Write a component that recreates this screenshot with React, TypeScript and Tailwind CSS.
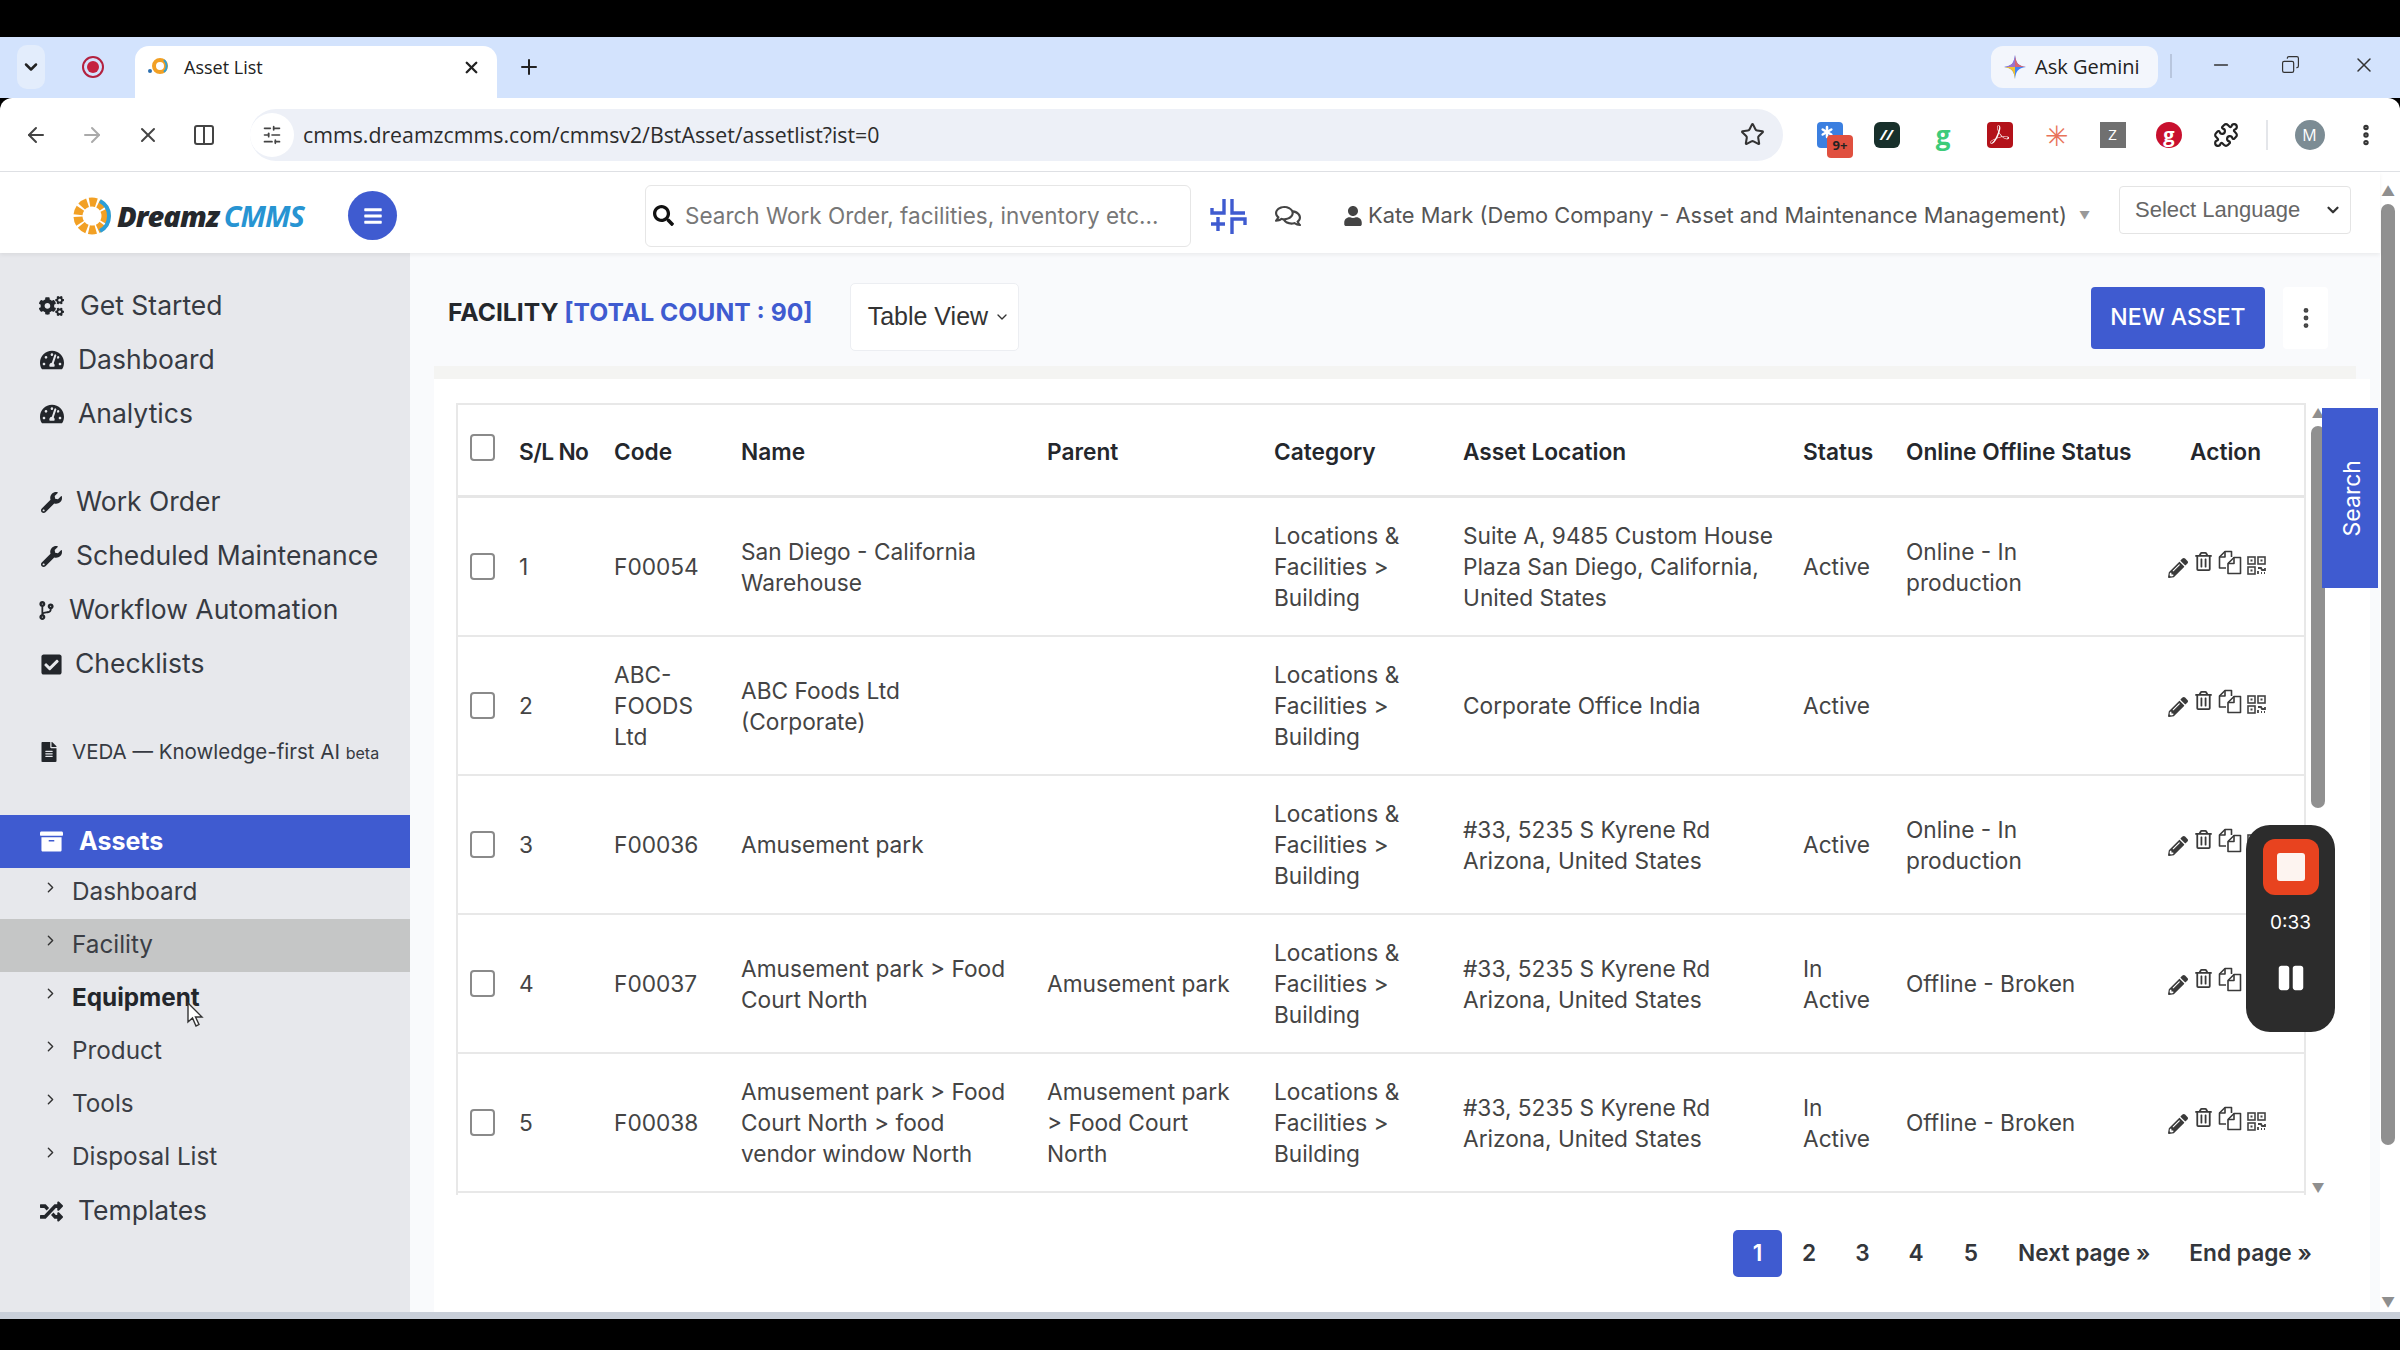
import React from "react";
import { FaCogs, FaTachometerAlt, FaWrench, FaCodeBranch, FaCheckSquare, FaFileAlt, FaArchive, FaRandom, FaPencilAlt, FaRegTrashAlt, FaSearch, FaUser, FaRegComments, FaBars, FaPause } from "react-icons/fa";
import { SiAdobeacrobatreader } from "react-icons/si";
import { LuArrowLeft, LuArrowRight, LuX, LuColumns2, LuSlidersHorizontal, LuStar, LuPuzzle, LuChevronDown, LuChevronRight, LuPlus, LuMinus, LuCopy, LuEllipsisVertical, LuAsterisk } from "react-icons/lu";

const font = "font-['Inter','Open_Sans',sans-serif]";

type Row = { n: number; code: string[]; name: string[]; parent: string[]; cat: string[]; loc: string[]; status: string[]; online: string[] };
const cat = ["Locations &", "Facilities >", "Building"];
const az = ["#33, 5235 S Kyrene Rd", "Arizona, United States"];
const rows: Row[] = [
  { n: 1, code: ["F00054"], name: ["San Diego - California", "Warehouse"], parent: [], cat, loc: ["Suite A, 9485 Custom House", "Plaza San Diego, California,", "United States"], status: ["Active"], online: ["Online - In", "production"] },
  { n: 2, code: ["ABC-", "FOODS", "Ltd"], name: ["ABC Foods Ltd", "(Corporate)"], parent: [], cat, loc: ["Corporate Office India"], status: ["Active"], online: [] },
  { n: 3, code: ["F00036"], name: ["Amusement park"], parent: [], cat, loc: az, status: ["Active"], online: ["Online - In", "production"] },
  { n: 4, code: ["F00037"], name: ["Amusement park > Food", "Court North"], parent: ["Amusement park"], cat, loc: az, status: ["In", "Active"], online: ["Offline - Broken"] },
  { n: 5, code: ["F00038"], name: ["Amusement park > Food", "Court North > food", "vendor window North"], parent: ["Amusement park", "> Food Court", "North"], cat, loc: az, status: ["In", "Active"], online: ["Offline - Broken"] },
];

const Lines = ({ l }: { l: string[] }) => (
  <div className="flex flex-col justify-center">
    {l.map((t, i) => <div key={i} className="whitespace-nowrap">{t}</div>)}
  </div>
);
const Box = () => <div className="w-[25px] h-[27px] rounded-[4px] border-2 border-[#8a8a8a] bg-white" />;
const cols = "grid grid-cols-[61px_95px_127px_306px_227px_189px_340px_103px_262px_138px]";

const SideItem = ({ icon, label, gap }: { icon: React.ReactNode; label: string; gap: string }) => (
  <div className="h-[54px] flex items-center pl-[39px] text-[26.5px] text-[#363a42]">
    <span className="w-[25px] flex justify-center text-[#23262b]">{icon}</span>
    <span className={gap + " whitespace-nowrap"}>{label}</span>
  </div>
);
const SubItem = ({ label, cls }: { label: string; cls?: string }) => (
  <div className={"h-[53px] flex items-center pl-[42px] text-[24.3px] text-[#3b3e45] " + (cls || "")}>
    <LuChevronRight size={17} className="text-[#333] -mt-[10px]" />
    <span className="ml-[13px] -mt-[2px]">{label}</span>
  </div>
);

function Logo() {
  return (
    <div className="flex items-center w-[278px]">
      <svg width="46" height="46" viewBox="0 0 46 46">
        <circle cx="22" cy="23" r="14" fill="none" stroke="#f2a024" strokeWidth="9" strokeDasharray="7 2" />
        <path d="M30 8 A17 17 0 0 1 30 38" fill="none" stroke="#2c9fd8" strokeWidth="4" />
        <circle cx="22" cy="23" r="6" fill="#fff" />
      </svg>
      <span className="ml-[1px] italic font-extrabold text-[29px] tracking-[-1px] text-[#25282c] font-['Open_Sans',sans-serif]">Dreamz</span>
      <span className="ml-[5px] italic font-bold text-[29px] tracking-[-1px] text-[#2794d2] font-['Open_Sans',sans-serif]">CMMS</span>
    </div>
  );
}

function Ext({ children, cls }: { children?: React.ReactNode; cls: string }) {
  return <div className={"w-[26px] h-[26px] rounded-[4px] flex items-center justify-center text-white text-[15px] font-bold relative " + cls}>{children}</div>;
}

const CopyIcon = () => (
  <svg width="24" height="25" viewBox="0 0 24 25" fill="none" stroke="#3a3a3a" strokeWidth="1.6" strokeLinejoin="round" className="ml-[5px]">
    <path d="M8 18H1.5V7L7 1.5H13.5V7" />
    <path d="M7 1.5V7H1.5" />
    <path d="M16 7.5H22.5V23.5H10V13.5L16 7.5Z" fill="#fff" />
    <path d="M16 7.5V13.5H10" />
  </svg>
);
const QrIcon = () => (
  <svg width="19" height="19" viewBox="0 0 19 19" fill="none" stroke="#444" strokeWidth="1.6" className="ml-[5px] mt-[6px]">
    <rect x="1" y="1" width="7" height="7" />
    <rect x="11" y="1" width="7" height="7" />
    <rect x="1" y="11" width="7" height="7" />
    <rect x="3.5" y="3.5" width="2" height="2" fill="#444" stroke="none" />
    <rect x="13.5" y="3.5" width="2" height="2" fill="#444" stroke="none" />
    <rect x="3.5" y="13.5" width="2" height="2" fill="#444" stroke="none" />
    <path d="M11 12H14L15 14H18V12M11 15V18M14 17H15M17 17H18" strokeWidth="1.8" />
  </svg>
);
function Actions() {
  return (
    <div className="flex items-start text-[#3a3a3a] -mt-[6px]">
      <FaPencilAlt size={20} className="mt-[8px]" />
      <FaRegTrashAlt size={19} className="ml-[6px] mt-[2px]" />
      <CopyIcon />
      <QrIcon />
    </div>
  );
}

export default function App() {
  return (
    <div className={"relative w-[2400px] h-[1350px] overflow-hidden bg-black flex flex-col " + font}>
      <div className="h-[37px] shrink-0 bg-black" />
      {/* Tab strip */}
      <div className="h-[61px] shrink-0 bg-[#d3e3fd] flex items-end pl-[17px] font-['Open_Sans',sans-serif] text-[#222]">
        <div className="self-center w-[28px] h-[44px] rounded-[10px] bg-[#e3edfc] flex items-center justify-center -mt-[2px]">
          <LuChevronDown size={20} strokeWidth={3} />
        </div>
        <div className="self-center ml-[37px] -mt-[2px] w-[22px] h-[22px] rounded-full border-2 border-[#b3213f] flex items-center justify-center">
          <div className="w-[12px] h-[12px] rounded-full bg-[#c5223f]" />
        </div>
        <div className="ml-[31px] w-[362px] h-[52px] bg-white rounded-t-[14px] flex items-center pl-[12px] pr-[16px] pb-[10px]">
          <svg width="22" height="22" viewBox="0 0 22 22"><circle cx="13" cy="10" r="6" fill="none" stroke="#f2a024" strokeWidth="4" /><path d="M17 4a8 8 0 0 1 0 12" fill="none" stroke="#2c9fd8" strokeWidth="2" /><circle cx="3" cy="15" r="2" fill="#2c6fb0" /></svg>
          <span className="ml-[15px] text-[18px]">Asset List</span>
          <LuX size={19} strokeWidth={3} className="ml-auto" />
        </div>
        <LuPlus size={24} strokeWidth={2} className="self-center ml-[20px] -mt-[2px]" />
        <div className="self-center ml-auto -mt-[2px] mr-[12px] h-[42px] w-[167px] bg-[#f3f6fc] rounded-[12px] flex items-center pl-[13px]">
          <svg width="22" height="24" viewBox="0 0 22 24"><path d="M11 0C12 8 14 11 22 12C14 13 12 16 11 24C10 16 8 13 0 12C8 11 10 8 11 0Z" fill="#4285f4" /><path d="M11 0C12 8 14 11 22 12L11 12Z" fill="#d96570" /><path d="M0 12C8 11 10 8 11 0L11 12Z" fill="#9b72cb" /><path d="M0 12C8 13 10 16 11 24L11 12Z" fill="#f2c230" /></svg>
          <span className="ml-[9px] text-[20px] font-medium whitespace-nowrap">Ask Gemini</span>
        </div>
        <div className="self-center -mt-[4px] w-[2px] h-[24px] bg-[#b8c6de]" />
        <div className="self-center -mt-[6px] flex items-center text-[#333]">
          <LuMinus size={22} strokeWidth={1.5} className="ml-[38px]" />
          <LuCopy size={19} strokeWidth={1.5} className="ml-[49px] -scale-x-100" />
          <LuX size={24} strokeWidth={1.5} className="ml-[52px] mr-[24px]" />
        </div>
      </div>
      {/* Toolbar */}
      <div className="h-[74px] shrink-0 bg-white rounded-tl-[12px] rounded-tr-[12px] border-b border-[#dfe1e5] flex items-center font-['Open_Sans',sans-serif] text-[#444]">
        <LuArrowLeft size={24} className="ml-[24px]" />
        <LuArrowRight size={24} className="ml-[32px] text-[#aaa]" />
        <LuX size={24} className="ml-[32px]" />
        <LuColumns2 size={24} className="ml-[32px]" />
        <div className="ml-[34px] w-[1533px] h-[52px] rounded-[26px] bg-[#edf0f7] flex items-center pr-[18px]">
          <div className="w-[44px] h-[44px] rounded-full bg-white flex items-center justify-center"><LuSlidersHorizontal size={20} /></div>
          <span className="ml-[9px] text-[21.3px] text-[#2c2c2c]">cmms.dreamzcmms.com/cmmsv2/BstAsset/assetlist?ist=0</span>
          <LuStar size={25} className="ml-auto text-[#333]" />
        </div>
        <div className="flex items-center ml-[34px]">
          <Ext cls="bg-[#3b7fe0]">
            <LuAsterisk size={20} strokeWidth={3} className="-mt-[6px] -ml-[6px]" />
            <span className="absolute left-[10px] top-[13px] w-[26px] h-[23px] rounded-[4px] bg-[#e0503f] text-[13px] text-[#222] flex items-center justify-center">9+</span>
          </Ext>
          <Ext cls="ml-[30.5px] bg-[#18302b] text-[#4fd18a] italic rounded-[6px]">//</Ext>
          <div className="ml-[30.5px] w-[26px] flex justify-center text-[#3dcb7a] text-[26px] font-bold leading-none">g</div>
          <Ext cls="ml-[30.5px] bg-[#b3121a]"><SiAdobeacrobatreader size={19} /></Ext>
          <div className="ml-[30.5px] w-[26px] flex justify-center text-[#e8735a] text-[28px] leading-none">✳</div>
          <Ext cls="ml-[30.5px] bg-[#707070] rounded-none font-normal">Z</Ext>
          <div className="ml-[30.5px] w-[26px] h-[26px] rounded-full bg-[#c8102e] text-white text-[20px] font-bold flex items-center justify-center leading-none">g</div>
          <LuPuzzle size={26} className="ml-[30.5px] text-[#222]" />
          <div className="ml-[27px] w-[2px] h-[30px] bg-[#e4e6ea]" />
          <div className="ml-[27px] w-[30px] h-[30px] rounded-full bg-[#7c8c94] text-white text-[16px] flex items-center justify-center">M</div>
          <LuEllipsisVertical size={26} strokeWidth={3} className="ml-[28px] text-[#333]" />
        </div>
      </div>
      {/* App area */}
      <div className="h-[1147px] shrink-0 bg-white flex relative border-b-[7px] border-[#c9cfd9]">
        <div className="flex-1 flex flex-col min-w-0">
          <header className="h-[81px] shrink-0 flex items-center pl-[70px] pt-[6px] shadow-[0_2px_4px_rgba(0,0,0,0.06)] relative z-10 bg-white">
            <Logo />
            <div className="w-[49px] h-[49px] rounded-full bg-[#3f5bd0] text-white flex items-center justify-center"><FaBars size={20} /></div>
            <div className="ml-[248px] w-[546px] h-[62px] rounded-[6px] border border-[#e6e6e6] flex items-center pl-[7px] text-[#111]">
              <FaSearch size={21} />
              <span className="ml-[11px] text-[22.5px] text-[#777] whitespace-nowrap">Search Work Order, facilities, inventory etc...</span>
            </div>
            <svg width="38" height="38" viewBox="0 0 36 38" fill="none" stroke="#3f5bd0" strokeWidth="3.4" className="ml-[18px]">
              <path d="M14 2V16H2V11" />
              <path d="M22 2V16H35" />
              <path d="M1 27H15M8 20V34" />
              <path d="M22 37V22H35V28" />
            </svg>
            <FaRegComments size={26} className="ml-[28px] text-[#444]" />
            <FaUser size={20} className="ml-[42px] text-[#444]" />
            <span className="ml-[5px] text-[21.85px] text-[#555] whitespace-nowrap">Kate Mark (Demo Company - Asset and Maintenance Management)</span>
            <span className="ml-[12px] text-[#999] text-[11px]">▼</span>
            <div className="ml-[29px] w-[232px] h-[48px] -mt-[12px] rounded-[4px] border border-[#e4e4e4] flex items-center pl-[15px] pr-[8px] font-['Liberation_Sans',sans-serif] text-[22px] text-[#666]">
              Select Language
              <LuChevronDown size={18} strokeWidth={3} className="ml-auto text-[#333]" />
            </div>
          </header>
          <div className="flex-1 flex min-h-0">
            <aside className="w-[410px] shrink-0 bg-[#e7e8ec] pt-[26px] flex flex-col">
              <SideItem icon={<FaCogs size={26} />} label="Get Started" gap="ml-[16px]" />
              <SideItem icon={<FaTachometerAlt size={24} />} label="Dashboard" gap="ml-[14px]" />
              <SideItem icon={<FaTachometerAlt size={24} />} label="Analytics" gap="ml-[14px]" />
              <div className="h-[34px]" />
              <SideItem icon={<FaWrench size={21} />} label="Work Order" gap="ml-[12px]" />
              <SideItem icon={<FaWrench size={21} />} label="Scheduled Maintenance" gap="ml-[12px]" />
              <SideItem icon={<FaCodeBranch size={19} className="-ml-[10px]" />} label="Workflow Automation" gap="ml-[5px]" />
              <SideItem icon={<FaCheckSquare size={23} />} label="Checklists" gap="ml-[11px]" />
              <div className="h-[34px]" />
              <div className="h-[54px] flex items-center pl-[39px] text-[20.5px] text-[#363a42]">
                <FaFileAlt size={20} className="text-[#23262b]" />
                <span className="ml-[13px] whitespace-nowrap">VEDA — Knowledge-first AI <span className="text-[16px]">beta</span></span>
              </div>
              <div className="h-[36px]" />
              <div className="h-[53px] bg-[#3f5bd0] flex items-center pl-[40px] text-white text-[25px] font-bold">
                <FaArchive size={23} />
                <span className="ml-[16px]">Assets</span>
              </div>
              <SubItem label="Dashboard" cls="!h-[49px] mb-[2px]" />
              <SubItem label="Facility" cls="bg-[#c5c6c6]" />
              <SubItem label="Equipment" cls="font-bold text-[#23262b]" />
              <SubItem label="Product" />
              <SubItem label="Tools" />
              <SubItem label="Disposal List" />
              <SideItem icon={<FaRandom size={23} />} label="Templates" gap="ml-[14px]" />
            </aside>
            <main className="flex-1 min-w-0 bg-[#f9fafc] flex flex-col">
              <div className="h-[113px] shrink-0 flex items-center pl-[38px] pr-[52px]">
                <div className="text-[24.7px] font-bold text-[#24272c] whitespace-nowrap mt-[6px]">FACILITY <span className="text-[#3f5bd0]">[TOTAL COUNT : 90]</span></div>
                <div className="ml-[37px] mt-[14px] w-[169px] h-[68px] bg-white rounded-[5px] border border-[#eceef2] flex items-center pl-[17px] font-['Liberation_Sans',sans-serif] text-[25px] text-[#333]">
                  Table View <LuChevronDown size={16} className="ml-[6px]" />
                </div>
                <button className="ml-auto mt-[16px] w-[174px] h-[62px] rounded-[4px] bg-[#3f5bd0] text-white text-[23px] font-medium">NEW ASSET</button>
                <div className="ml-[18px] mt-[16px] w-[45px] h-[62px] bg-white rounded-[4px] flex items-center justify-center text-[#444]"><LuEllipsisVertical size={26} strokeWidth={2.5} /></div>
              </div>
              <div className="mx-[24px] h-[13px] shrink-0 bg-[#f4f4f2]" />
              <div className="flex-1 bg-white ml-[24px] mr-[10px] pt-[24px] pl-[22px] text-[22.7px] text-[#444]">
                <div className="flex">
                  <div className="w-[1850px] shrink-0 border-t-[2px] border-l-[2px] border-r-[2px] border-[#e8e8e8]">
                    <div className={cols + " h-[93px] border-b-[3px] border-[#e6e6e6] items-center font-semibold text-[#24272c] pt-[5px]"}>
                      <div className="pl-[12px] -mt-[10px]"><Box /></div>
                      <div className="tracking-[-0.6px]">S/L No</div><div>Code</div><div>Name</div><div>Parent</div><div>Category</div><div>Asset Location</div><div>Status</div>
                      <div className="whitespace-nowrap">Online Offline Status</div>
                      <div className="pl-[22px]">Action</div>
                    </div>
                    {rows.map((r) => (
                      <div key={r.n} className={cols + " h-[139px] border-b-[2px] border-[#e8e8e8] items-center leading-[31px]"}>
                        <div className="pl-[12px]"><Box /></div>
                        <div>{r.n}</div>
                        <Lines l={r.code} /><Lines l={r.name} /><Lines l={r.parent} /><Lines l={r.cat} /><Lines l={r.loc} /><Lines l={r.status} /><Lines l={r.online} />
                        <Actions />
                      </div>
                    ))}
                  </div>
                  <div className="ml-[5px] w-[14px] flex flex-col items-center text-[#8f8f8f]">
                    <div className="text-[13px] leading-none mt-[4px]">▲</div>
                    <div className="w-[14px] h-[382px] rounded-[7px] bg-[#909090] mt-[6px]" />
                    <div className="text-[13px] leading-none mt-[374px]">▼</div>
                  </div>
                </div>
                <div className="mt-[35px] flex items-center font-semibold text-[#33363b] whitespace-nowrap">
                  <div className="ml-[1277px] w-[49px] h-[47px] rounded-[5px] bg-[#3f5bd0] text-white flex items-center justify-center">1</div>
                  <span className="ml-[20px]">2</span>
                  <span className="ml-[39px]">3</span>
                  <span className="ml-[39px]">4</span>
                  <span className="ml-[40px]">5</span>
                  <span className="ml-[40px]">Next page »</span>
                  <span className="ml-[39px]">End page »</span>
                </div>
              </div>
            </main>
          </div>
        </div>
        <div className="w-[20px] shrink-0 flex flex-col items-center text-[#8f8f8f] bg-white pr-[4px]">
          <div className="text-[14px] leading-none mt-[12px]">▲</div>
          <div className="w-[14px] h-[941px] rounded-[7px] bg-[#909090] mt-[6px]" />
          <div className="text-[14px] leading-none mt-auto mb-[2px]">▼</div>
        </div>
      </div>
      {/* overlays */}
      <div className="absolute left-[2322px] top-[408px] w-[56px] h-[180px] bg-[#3f5bd0] flex items-center justify-center pl-[5px]">
        <span className="text-white text-[23px] -rotate-90">Search</span>
      </div>
      <div className="absolute left-[2246px] top-[825px] w-[89px] h-[207px] rounded-[24px] bg-[#2c2c2c] flex flex-col items-center pt-[14px] text-white">
        <div className="w-[56px] h-[56px] rounded-[12px] bg-[#e8431f] flex items-center justify-center"><div className="w-[28px] h-[28px] rounded-[3px] bg-[#fdf4f0]" /></div>
        <div className="mt-[14px] text-[19px]">0:33</div>
        <FaPause size={28} className="mt-[26px]" />
      </div>
      <svg className="absolute left-[186px] top-[1002px]" width="18" height="26" viewBox="0 0 18 26"><path d="M2 1V20L6.5 16L10 24L13 22.5L9.5 15H16Z" fill="#fff" stroke="#333" strokeWidth="1.4" /></svg>
    </div>
  );
}
